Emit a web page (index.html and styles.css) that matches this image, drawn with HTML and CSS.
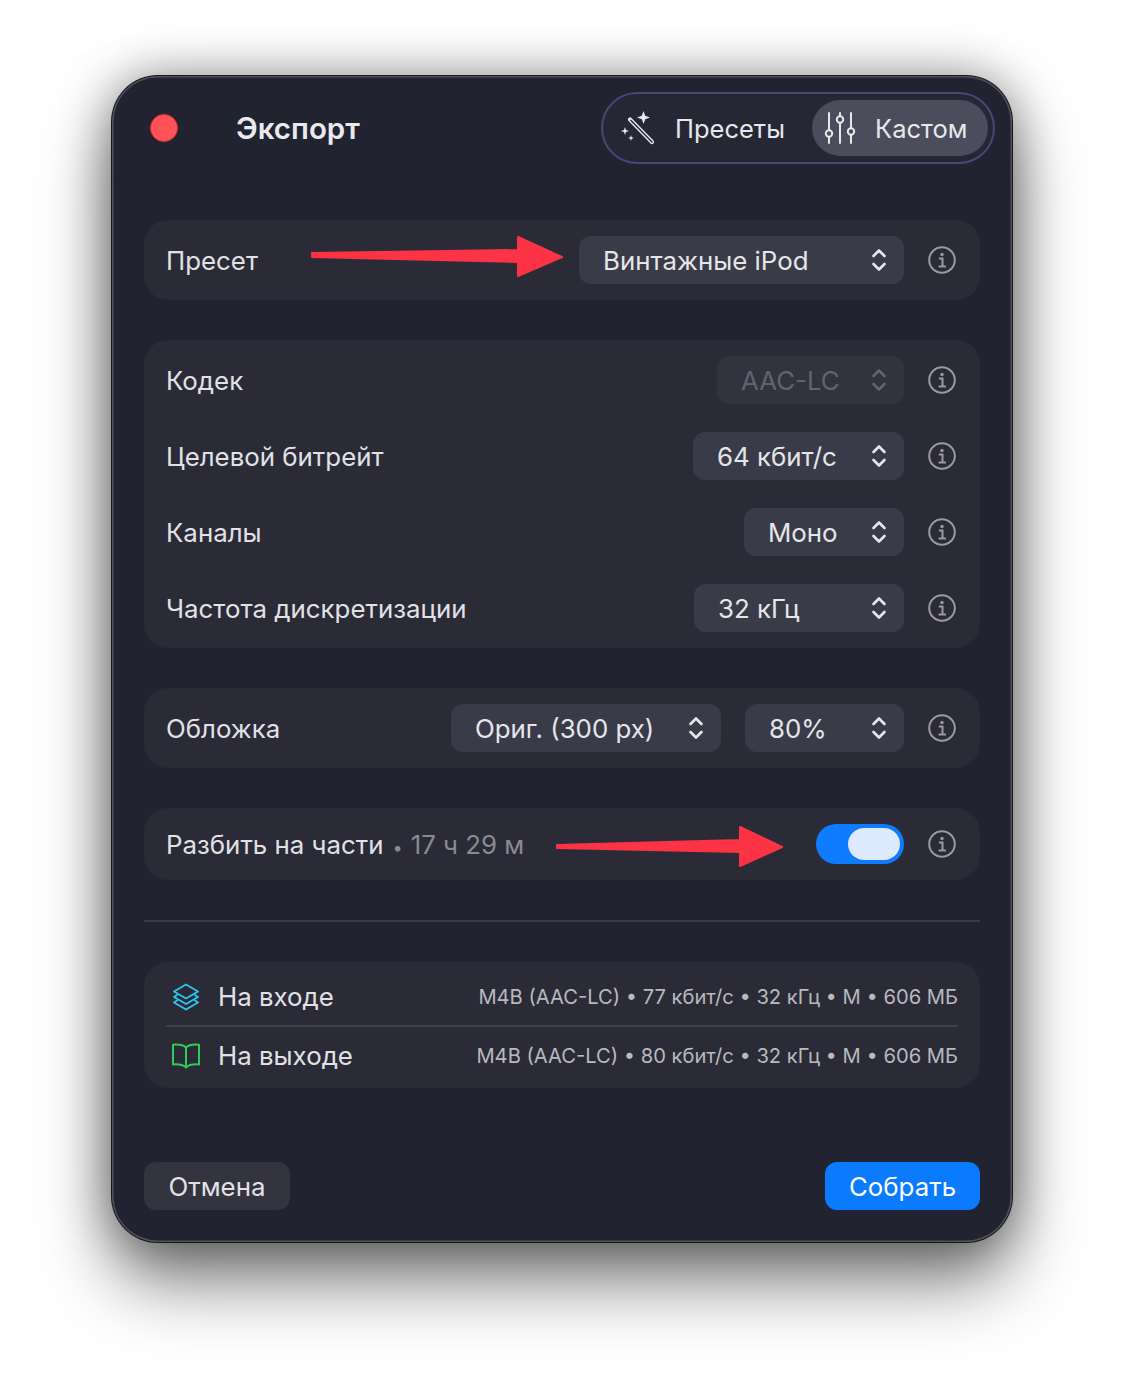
FILE: index.html
```html
<!DOCTYPE html>
<html lang="ru">
<head>
<meta charset="utf-8">
<title>Экспорт</title>
<link rel="stylesheet" href="styles.css">
</head>
<body>
<main class="window">
  <header class="titlebar">
    <span class="close"></span>
    <h1 class="title">Экспорт</h1>
    <div class="segment">
      <div class="seg-item">
        <svg class="seg-icon" viewBox="0 0 36 36" fill="none" stroke="#e8e8ec"><path d="M10 9.5l22 22.500" stroke-width="4.200" stroke-linecap="round"/><path d="M10.500 10l22 22.500" stroke="#23253a" stroke-width="1.400"/><path d="M23.500 1l1.700 4.800 4.800 1.700-4.800 1.700-1.700 4.800-1.700-4.800-4.800-1.700 4.800-1.700z" fill="#e8e8ec" stroke="none"/><path d="M5 17l1 3 3 1-3 1-1 3-1-3-3-1 3-1z" fill="#e8e8ec" stroke="none"/><path d="M11 25l.7 2.300 2.300.7-2.300.7-.7 2.300-.7-2.300-2.300-.7 2.300-.7z" fill="#e8e8ec" stroke="none"/></svg>
        <span class="seg-text">Пресеты</span>
      </div>
      <div class="seg-item seg-active">
        <svg class="seg-icon-alt" viewBox="0 0 32 32" fill="none" stroke="#e8e8ec" stroke-width="2" stroke-linecap="round"><path d="M5 1v17M5 25v6M16 1v3M16 11v20M27 1v15M27 23v8"/><circle cx="5" cy="21.500" r="3.200"/><circle cx="16" cy="7.500" r="3.200"/><circle cx="27" cy="19.500" r="3.200"/></svg>
        <span class="seg-text">Кастом</span>
      </div>
    </div>
  </header>

  <div class="content">
    <section class="card card-single">
      <div class="row">
        <span class="label">Пресет</span>
        <div class="select w-preset"><span>Винтажные iPod</span><svg class="chev" viewBox="0 0 16 24" fill="none" stroke="currentColor" stroke-width="2.600" stroke-linecap="round" stroke-linejoin="round"><path d="M2.500 8L8 2.500 13.500 8M2.500 16L8 21.500 13.500 16"/></svg></div>
        <svg class="info" viewBox="0 0 28 28" fill="none" stroke="#9a9aa0"><circle cx="14" cy="14" r="12.800" stroke-width="2"/><circle cx="14" cy="8.500" r="1.700" fill="#9a9aa0" stroke="none"/><path d="M10.800 12.500H14.500V20M10.500 20.500H18" stroke-width="2"/></svg>
      </div>
    </section>

    <section class="card card-list">
      <div class="row">
        <span class="label">Кодек</span>
        <div class="select select-off w-codec"><span>AAC-LC</span><svg class="chev" viewBox="0 0 16 24" fill="none" stroke="currentColor" stroke-width="2.600" stroke-linecap="round" stroke-linejoin="round"><path d="M2.500 8L8 2.500 13.500 8M2.500 16L8 21.500 13.500 16"/></svg></div>
        <svg class="info" viewBox="0 0 28 28" fill="none" stroke="#9a9aa0"><circle cx="14" cy="14" r="12.800" stroke-width="2"/><circle cx="14" cy="8.500" r="1.700" fill="#9a9aa0" stroke="none"/><path d="M10.800 12.500H14.500V20M10.500 20.500H18" stroke-width="2"/></svg>
      </div>
      <div class="row">
        <span class="label">Целевой битрейт</span>
        <div class="select w-rate"><span>64 кбит/с</span><svg class="chev" viewBox="0 0 16 24" fill="none" stroke="currentColor" stroke-width="2.600" stroke-linecap="round" stroke-linejoin="round"><path d="M2.500 8L8 2.500 13.500 8M2.500 16L8 21.500 13.500 16"/></svg></div>
        <svg class="info" viewBox="0 0 28 28" fill="none" stroke="#9a9aa0"><circle cx="14" cy="14" r="12.800" stroke-width="2"/><circle cx="14" cy="8.500" r="1.700" fill="#9a9aa0" stroke="none"/><path d="M10.800 12.500H14.500V20M10.500 20.500H18" stroke-width="2"/></svg>
      </div>
      <div class="row">
        <span class="label">Каналы</span>
        <div class="select w-chan"><span>Моно</span><svg class="chev" viewBox="0 0 16 24" fill="none" stroke="currentColor" stroke-width="2.600" stroke-linecap="round" stroke-linejoin="round"><path d="M2.500 8L8 2.500 13.500 8M2.500 16L8 21.500 13.500 16"/></svg></div>
        <svg class="info" viewBox="0 0 28 28" fill="none" stroke="#9a9aa0"><circle cx="14" cy="14" r="12.800" stroke-width="2"/><circle cx="14" cy="8.500" r="1.700" fill="#9a9aa0" stroke="none"/><path d="M10.800 12.500H14.500V20M10.500 20.500H18" stroke-width="2"/></svg>
      </div>
      <div class="row">
        <span class="label">Частота дискретизации</span>
        <div class="select w-freq"><span>32 кГц</span><svg class="chev" viewBox="0 0 16 24" fill="none" stroke="currentColor" stroke-width="2.600" stroke-linecap="round" stroke-linejoin="round"><path d="M2.500 8L8 2.500 13.500 8M2.500 16L8 21.500 13.500 16"/></svg></div>
        <svg class="info" viewBox="0 0 28 28" fill="none" stroke="#9a9aa0"><circle cx="14" cy="14" r="12.800" stroke-width="2"/><circle cx="14" cy="8.500" r="1.700" fill="#9a9aa0" stroke="none"/><path d="M10.800 12.500H14.500V20M10.500 20.500H18" stroke-width="2"/></svg>
      </div>
    </section>

    <section class="card card-single">
      <div class="row">
        <span class="label">Обложка</span>
        <div class="select w-cover"><span>Ориг. (300 px)</span><svg class="chev" viewBox="0 0 16 24" fill="none" stroke="currentColor" stroke-width="2.600" stroke-linecap="round" stroke-linejoin="round"><path d="M2.500 8L8 2.500 13.500 8M2.500 16L8 21.500 13.500 16"/></svg></div>
        <div class="select w-qual"><span>80%</span><svg class="chev" viewBox="0 0 16 24" fill="none" stroke="currentColor" stroke-width="2.600" stroke-linecap="round" stroke-linejoin="round"><path d="M2.500 8L8 2.500 13.500 8M2.500 16L8 21.500 13.500 16"/></svg></div>
        <svg class="info" viewBox="0 0 28 28" fill="none" stroke="#9a9aa0"><circle cx="14" cy="14" r="12.800" stroke-width="2"/><circle cx="14" cy="8.500" r="1.700" fill="#9a9aa0" stroke="none"/><path d="M10.800 12.500H14.500V20M10.500 20.500H18" stroke-width="2"/></svg>
      </div>
    </section>

    <section class="card card-split">
      <div class="row">
        <span class="label">Разбить на части<span class="muted"><span class="dot-sep">•</span>17 ч 29 м</span></span>
        <div class="toggle"><span class="knob"></span></div>
        <svg class="info" viewBox="0 0 28 28" fill="none" stroke="#9a9aa0"><circle cx="14" cy="14" r="12.800" stroke-width="2"/><circle cx="14" cy="8.500" r="1.700" fill="#9a9aa0" stroke="none"/><path d="M10.800 12.500H14.500V20M10.500 20.500H18" stroke-width="2"/></svg>
      </div>
    </section>

    <hr class="rule">

    <section class="card card-summary">
      <div class="sum-row">
        <svg class="sum-icon" viewBox="0 0 28 28" fill="none" stroke="#2cc4ea" stroke-width="2" stroke-linejoin="round" stroke-linecap="round"><path d="M14 1.500l12 7-12 7-12-7z"/><path d="M5 12l-3 2 12 7 12-7-3-2"/><path d="M5 17.500l-3 2 12 7 12-7-3-2"/></svg>
        <span class="sum-label">На входе</span>
        <span class="sum-meta">M4B (AAC-LC) • 77 кбит/с • 32 кГц • М • 606 МБ</span>
      </div>
      <div class="sum-row sum-second">
        <svg class="sum-icon" viewBox="0 0 30 26" fill="none" stroke="#2fcb58" stroke-width="2" stroke-linejoin="round" stroke-linecap="round"><path d="M15 4.500C12.500 2 8 1.200 2 1.800V21.500C7.500 21 12 21.800 15 24.500C18 21.800 22.500 21 28 21.500V1.800C22 1.200 17.500 2 15 4.500zM15 4.500V24"/></svg>
        <span class="sum-label">На выходе</span>
        <span class="sum-meta">M4B (AAC-LC) • 80 кбит/с • 32 кГц • М • 606 МБ</span>
      </div>
    </section>

    <footer class="actions">
      <button class="btn btn-cancel">Отмена</button>
      <button class="btn btn-primary">Собрать</button>
    </footer>
  </div>

  <svg class="arrow arrow-top" viewBox="0 0 256 46" fill="#fc3344" stroke="#fc3344" stroke-linejoin="round" stroke-width="2"><path d="M3 20L209 17V4L253 24 209 43V29L3 24z"/></svg>
  <svg class="arrow arrow-bottom" viewBox="0 0 232 46" fill="#fc3344" stroke="#fc3344" stroke-linejoin="round" stroke-width="2"><path d="M3 22L186 17V4L228 24 186 43V29L3 25z"/></svg>
</main>
</body>
</html>
```
FILE: styles.css
```css
* { box-sizing: border-box; }
html, body { margin: 0; height: 100%; }
body {
  background: #fff;
  font-family: Inter, "Liberation Sans", sans-serif;
  color: #e4e4e8;
  padding: 76px 0 0 112px;
  overflow: hidden;
}
.window {
  position: relative;
  width: 900px;
  height: 1166px;
  border-radius: 46px;
  background: #212330;
  box-shadow:
    inset 0 0 0 1.500px #50515b,
    0 0 0 1px #15151a,
    0 40px 70px rgba(0, 0, 0, .5),
    0 0 50px rgba(0, 0, 0, .4);
}
.titlebar {
  display: flex;
  align-items: center;
  height: 102px;
  padding: 2px 17px 0 38px;
  border-bottom: 1px solid rgba(0, 0, 0, .06);
}
.close {
  width: 28px;
  height: 28px;
  border-radius: 50%;
  background: #ff5257;
  border: 1px solid #e0303a;
  flex: none;
}
.title {
  margin: 0 0 0 58px;
  font-size: 29.500px;
  font-weight: 600;
  color: #e9e9ee;
  flex: 1;
}
.segment {
  display: flex;
  align-items: center;
  justify-content: space-between;
  width: 394px;
  height: 72px;
  padding: 0 5px 0 17px;
  border-radius: 36px;
  border: 2px solid #454878;
  background: #252735;
  font-size: 25.500px;
  color: #e8e8ec;
}
.seg-item {
  display: flex;
  align-items: center;
  height: 56px;
}
.seg-text { padding-top: 2px; }
.seg-icon { width: 36px; height: 36px; margin-right: 19px; }
.seg-icon-alt { width: 32px; height: 32px; margin-right: 19px; }
.seg-active {
  width: 176px;
  padding-left: 12px;
  border-radius: 28px;
  background: #4b4c5c;
}
.content { padding: 42px 32px 0; }
.card {
  background: #2a2b37;
  border-radius: 24px;
  margin-bottom: 40px;
}
.card-single { padding: 16px 24px 16px 22px; }
.card-list {
  padding: 16px 24px 16px 22px;
  display: flex;
  flex-direction: column;
  gap: 28px;
}
.card-split { padding: 12px 24px 12px 22px; height: 72px; display: flex; align-items: center; }
.card-split .row { flex: 1; height: 48px; }
.row {
  display: flex;
  align-items: center;
  height: 48px;
}
.label {
  flex: 1;
  font-size: 25.850px;
  color: #e2e2e6;
}
.muted { color: #8a8a92; }
.dot-sep { margin: 0 8px 0 9px; font-size: 18px; }
.select {
  display: flex;
  align-items: center;
  justify-content: space-between;
  height: 48px;
  padding: 0 17px 0 24px;
  border-radius: 12px;
  background: #3a3b48;
  font-size: 25.850px;
  color: #e6e6ea;
  margin-right: 24px;
  flex: none;
}
.select-off { color: #62636d; background: #32333f; }
.chev { width: 16px; height: 24px; flex: none; }
.w-preset { width: 325px; }
.w-codec { width: 187px; }
.w-rate { width: 211px; }
.w-chan { width: 160px; }
.w-freq { width: 210px; }
.w-cover { width: 270px; }
.w-qual { width: 159px; }
.info { width: 28px; height: 28px; flex: none; }
.toggle {
  display: flex;
  align-items: center;
  justify-content: flex-end;
  width: 88px;
  height: 40px;
  padding-right: 4px;
  border-radius: 20px;
  background: #0f7bff;
  margin-right: 24px;
}
.knob {
  width: 52px;
  height: 32px;
  border-radius: 16px;
  background: #dde9ff;
}
.rule {
  margin: 0 0 40px;
  border: 0;
  border-top: 2px solid #3a3b47;
}
.card-summary {
  height: 126px;
  padding: 6px 22px 0;
  margin-bottom: 74px;
}
.sum-row {
  display: flex;
  align-items: center;
  height: 57px;
}
.sum-second {
  border-top: 2px solid #3f404c;
  height: 59px;
}
.sum-icon { width: 30px; height: 28px; margin-left: 5px; flex: none; }
.sum-label {
  flex: 1;
  margin-left: 17px;
  font-size: 25.850px;
  color: #e2e2e6;
}
.sum-meta {
  font-size: 20.150px;
  color: #b9b9bf;
  white-space: nowrap;
}
.actions {
  display: flex;
  justify-content: space-between;
}
.btn {
  width: 146px;
  height: 48px;
  padding: 0;
  border: 0;
  border-radius: 12px;
  font: inherit;
  font-size: 25.850px;
}
.btn-cancel { background: #33343f; color: #e2e2e6; }
.btn-primary { width: 155px; background: #0a7bff; color: #fff; }
.arrow { position: absolute; }
.arrow-top { left: 197px; top: 157px; width: 256px; height: 46px; }
.arrow-bottom { left: 442px; top: 747px; width: 232px; height: 46px; }
```
